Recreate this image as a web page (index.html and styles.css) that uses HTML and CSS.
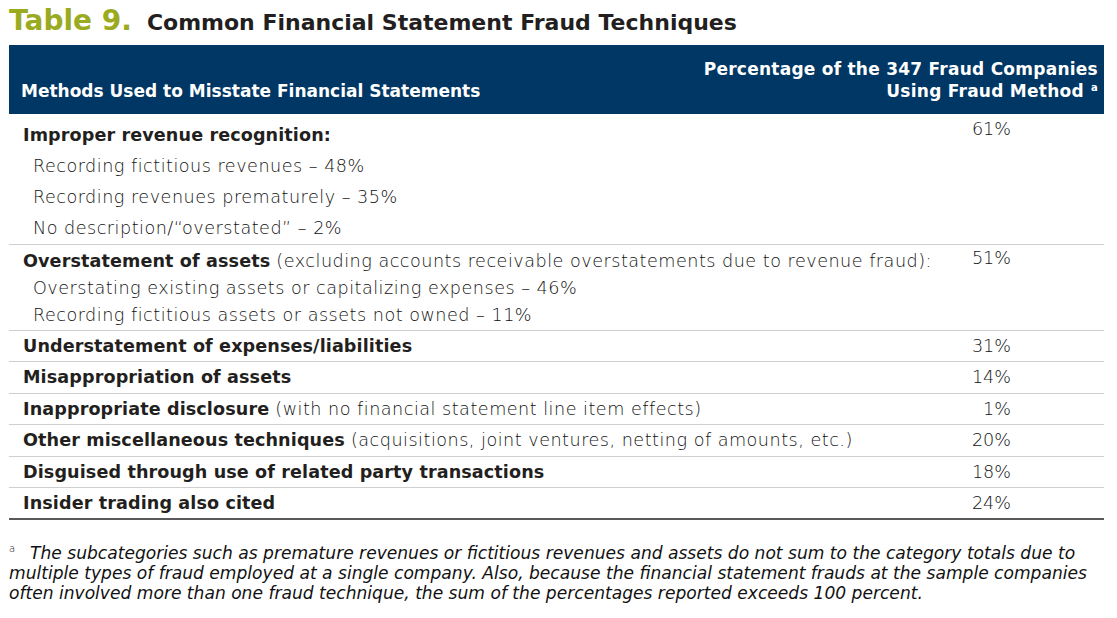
FILE: index.html
```html
<!DOCTYPE html>
<html lang="en">
<head>
<meta charset="utf-8">
<title>Table 9. Common Financial Statement Fraud Techniques</title>
<link rel="stylesheet" href="styles.css">
</head>
<body>
<div class="page">
  <h1 class="title"><span class="title-num">Table 9.</span><span class="title-text">Common Financial Statement Fraud Techniques</span></h1>
  <table class="fraud">
    <thead>
      <tr>
        <th class="h-method">Methods Used to Misstate Financial Statements</th>
        <th class="h-pct"><div class="h-pct-lines"><span>Percentage of the 347 Fraud Companies</span><span>Using Fraud Method <sup>a</sup></span></div></th>
      </tr>
    </thead>
    <tbody>
      <tr class="group g1">
        <td>
          <div class="line"><b>Improper revenue recognition:</b></div>
          <div class="line sub">Recording fictitious revenues – 48%</div>
          <div class="line sub">Recording revenues prematurely – 35%</div>
          <div class="line sub">No description/“overstated” – 2%</div>
        </td>
        <td class="pct"><div class="line">61%</div></td>
      </tr>
      <tr class="group g2">
        <td>
          <div class="line"><b>Overstatement of assets</b> (excluding accounts receivable overstatements due to revenue fraud):</div>
          <div class="line sub">Overstating existing assets or capitalizing expenses – 46%</div>
          <div class="line sub">Recording fictitious assets or assets not owned – 11%</div>
        </td>
        <td class="pct"><div class="line">51%</div></td>
      </tr>
      <tr class="single"><td><b>Understatement of expenses/liabilities</b></td><td class="pct">31%</td></tr>
      <tr class="single"><td><b>Misappropriation of assets</b></td><td class="pct">14%</td></tr>
      <tr class="single"><td><b>Inappropriate disclosure</b> (with no financial statement line item effects)</td><td class="pct">1%</td></tr>
      <tr class="single"><td><b>Other miscellaneous techniques</b> (acquisitions, joint ventures, netting of amounts, etc.)</td><td class="pct">20%</td></tr>
      <tr class="single"><td><b>Disguised through use of related party transactions</b></td><td class="pct">18%</td></tr>
      <tr class="single last"><td><b>Insider trading also cited</b></td><td class="pct">24%</td></tr>
    </tbody>
  </table>
  <p class="note"><span class="note-mark">a</span>The subcategories such as premature revenues or fictitious revenues and assets do not sum to the category totals due to multiple types of fraud employed at a single company. Also, because the financial statement frauds at the sample companies often involved more than one fraud technique, the sum of the percentages reported exceeds 100 percent.</p>
</div>
</body>
</html>
```
FILE: styles.css
```css
html, body {
  margin: 0;
  padding: 0;
  background: #ffffff;
}
body {
  font-family: "DejaVu Sans", "Open Sans", sans-serif;
  color: #231f20;
}
.page {
  width: 1095px;
  padding: 4px 0 0 9px;
}
.title {
  margin: 0;
  height: 41px;
  display: flex;
  align-items: baseline;
  gap: 15px;
  font-weight: 700;
  white-space: nowrap;
}
.title-num {
  color: #9aab22;
  font-size: 28px;
}
.title-text {
  font-size: 22px;
  color: #231f20;
}
.fraud {
  width: 1095px;
  border-collapse: collapse;
  table-layout: fixed;
}
.fraud th {
  background: #003764;
  color: #ffffff;
  font-weight: 700;
  font-size: 17px;
  line-height: 22px;
  vertical-align: bottom;
  padding: 0 0 12px 0;
  height: 69px;
  box-sizing: border-box;
  white-space: nowrap;
}
.h-method {
  text-align: left;
  padding-left: 12px !important;
  width: 940px;
}
.h-pct {
  padding-right: 6px !important;
}
.h-pct-lines {
  display: flex;
  flex-direction: column;
  align-items: flex-end;
  letter-spacing: 0.25px;
}
.h-pct sup {
  font-size: 10px;
  vertical-align: 6px;
  line-height: 0;
  margin-left: 1px;
}
.fraud td {
  font-size: 17.6px;
  font-weight: 300;
  color: #111111;
  letter-spacing: 0.5px;
  vertical-align: top;
  padding: 0 0 0 14px;
  border-bottom: 1px solid #cfcfcf;
  white-space: nowrap;
}
.fraud td b {
  font-weight: 700;
  color: #231f20;
  letter-spacing: 0.1px;
}
.fraud td.pct {
  text-align: right;
  padding: 0 93px 0 0;
  letter-spacing: 0;
}
.g1 td {
  padding-top: 6px;
}
.g1 .line {
  line-height: 31px;
}
.g2 td {
  padding-top: 3px;
  padding-bottom: 1px;
}
.g2 .line {
  line-height: 27px;
}
.sub {
  padding-left: 10px;
}
.single td {
  line-height: 30.4px;
}
.single.last td {
  border-bottom: 2px solid #58595b;
}
.note {
  position: relative;
  margin: 23px 0 0 0;
  font-size: 17.1px;
  font-style: italic;
  font-weight: 300;
  line-height: 20px;
  color: #111111;
  width: 1100px;
  text-indent: 21px;
}
.note-mark {
  position: absolute;
  left: 0;
  top: 1px;
  text-indent: 0;
  font-size: 10px;
  font-style: normal;
  line-height: 10px;
}
```
